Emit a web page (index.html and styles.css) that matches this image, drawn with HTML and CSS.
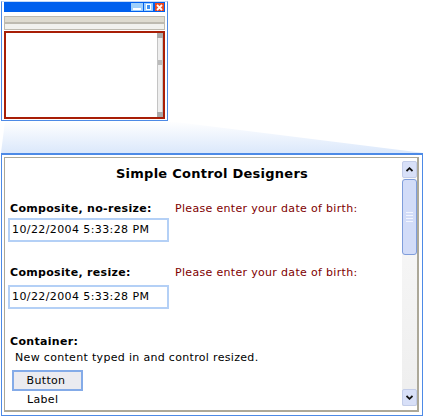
FILE: index.html
```html
<!DOCTYPE html>
<html lang="en">
<head>
	<meta charset="UTF-8">
	<title>Simple Control Designers</title>
	<link rel="stylesheet" href="styles.css">
</head>
<body>

	<div class="thumb">
		<div class="thumb-title">
			<span class="thumb-btn wide"><span class="thumb-min"></span></span>
			<span class="thumb-btn"><span class="thumb-max"></span></span>
			<span class="thumb-close">
				<svg width="7" height="7" viewBox="0 0 7 7"><path d="M1 1L6 6M6 1L1 6" stroke="#fff" stroke-width="1.800"/></svg>
			</span>
		</div>
		<div class="thumb-bar dark"></div>
		<div class="thumb-bar"></div>
		<div class="thumb-body">
			<div class="thumb-scroll">
				<div class="thumb-arrow"></div>
				<div class="thumb-track"><div class="thumb-grip"></div></div>
				<div class="thumb-arrow"></div>
			</div>
		</div>
	</div>

	<svg class="connector" width="424" height="32" viewBox="0 0 424 32">
		<defs>
			<linearGradient id="fade" x1="0" y1="0" x2="0" y2="1">
				<stop offset="0" stop-color="#ffffff"/>
				<stop offset="1" stop-color="#dbe8fb"/>
			</linearGradient>
		</defs>
		<polygon points="5,0 168,0 424,32 1,32" fill="url(#fade)"/>
	</svg>

	<div class="panel">
		<div class="panel-inner">
			<div class="content">
				<h1>Simple Control Designers</h1>

				<div class="row">
					<div class="col">
						<label>Composite, no-resize:</label>
						<div class="date">10/22/2004 5:33:28 PM</div>
					</div>
					<div class="prompt">Please enter your date of birth:</div>
				</div>

				<div class="row">
					<div class="col">
						<label>Composite, resize:</label>
						<div class="date low">10/22/2004 5:33:28 PM</div>
					</div>
					<div class="prompt">Please enter your date of birth:</div>
				</div>

				<div class="box">
					<label>Container:</label>
					<div class="typed">New content typed in and control resized.</div>
					<button type="button">Button</button>
					<div class="small-label">Label</div>
				</div>
			</div>

			<div class="scrollbar">
				<div class="arrow">
					<svg width="7" height="5" viewBox="0 0 7 5"><path d="M0.500 4L3.500 1.200L6.500 4" fill="none" stroke="#111" stroke-width="1.800"/></svg>
				</div>
				<div class="grip">
					<span></span><span></span><span></span><span></span>
				</div>
				<div class="track"></div>
				<div class="arrow">
					<svg width="7" height="5" viewBox="0 0 7 5"><path d="M0.500 1L3.500 3.800L6.500 1" fill="none" stroke="#111" stroke-width="1.800"/></svg>
				</div>
			</div>
		</div>
	</div>

</body>
</html>
```

FILE: styles.css
```css
* {
	box-sizing: border-box;
}
body {
	margin: 0;
	width: 424px;
	height: 416px;
	overflow: hidden;
	background: #fff;
	font-family: "DejaVu Sans", sans-serif;
	font-size: 11px;
	letter-spacing: 0.32px;
	color: #000;
}

/* small window at the top */
.thumb {
	width: 167px;
	height: 120px;
	margin: 1px 0 0 1px;
	padding: 0 2px;
	border: 1px solid #4d8ae6;
	border-top-color: #c4daf8;
	display: flex;
	flex-direction: column;
}
.thumb-title {
	height: 10px;
	flex: none;
	margin-bottom: 4px;
	padding: 1px 1px 0 0;
	background: #0060ee;
	display: flex;
	justify-content: flex-end;
	gap: 1px;
}
.thumb-btn {
	width: 9px;
	height: 8px;
	background: #9fd0fb;
	padding: 1px 2px;
	display: flex;
	align-items: flex-end;
}
.thumb-btn.wide {
	width: 12px;
}
.thumb-min {
	width: 100%;
	height: 2px;
	background: #fff;
}
.thumb-max {
	width: 100%;
	height: 100%;
	background: #3d92f2;
	border: 1px solid #fff;
}
.thumb-close {
	width: 9px;
	height: 8px;
	margin-left: 1px;
	background: #ee4a1e;
	display: flex;
	align-items: center;
	justify-content: center;
}
.thumb-bar {
	height: 7px;
	flex: none;
	background: #f1f1ee;
	border: 1px solid #bdbab0;
}
.thumb-bar.dark {
	background: #dedbd0;
}
.thumb-body {
	flex: 1;
	margin: 1px 0;
	background: #fff;
	border: 2px solid #a81e06;
	display: flex;
	justify-content: flex-end;
}
.thumb-scroll {
	width: 6px;
	display: flex;
	flex-direction: column;
}
.thumb-arrow {
	height: 5px;
	background: #aaa;
}
.thumb-track {
	flex: 1;
	background: #eee;
	border-left: 1px solid #c4c4c4;
	border-right: 1px solid #c4c4c4;
	padding-top: 22px;
}
.thumb-grip {
	height: 5px;
	background: #bbb;
}

.connector {
	display: block;
}

/* enlarged view */
.panel {
	width: 422px;
	height: 263px;
	margin-left: 1px;
	padding: 2px 3px 3px 2px;
	border: 1px solid #4d8ae6;
	border-top-width: 2px;
}
.panel-inner {
	height: 100%;
	padding: 3px 0 4px 0;
	border: 1px solid #aca899;
	border-width: 1px 2px 2px 1px;
	display: flex;
}
.content {
	flex: 1;
	padding: 4px 0 0 4px;
}
h1 {
	margin: 0 0 19px;
	padding-left: 13px;
	font-size: 13px;
	letter-spacing: 0.25px;
	line-height: 18px;
	text-align: center;
}
label {
	display: block;
	margin-left: 1px;
	font-weight: bold;
	line-height: 14px;
}
.row {
	height: 64px;
	display: flex;
}
.col {
	width: 166px;
}
.date {
	width: 161px;
	height: 24px;
	margin: 2px 0 0 -1px;
	padding-left: 2px;
	border: 2px solid #b4d0f6;
	letter-spacing: 0.4px;
	line-height: 20px;
}
.date.low {
	margin-top: 5px;
}
.prompt {
	color: #800000;
	line-height: 14px;
}
.box {
	padding-top: 5px;
}
.typed {
	margin: 2px 0 5px 6px;
	line-height: 14px;
}
button {
	display: block;
	width: 71px;
	height: 21px;
	margin-left: 3px;
	padding: 0 3px 0 0;
	background: #ebebf0;
	border: 2px solid #84abe8;
	font: inherit;
	letter-spacing: inherit;
	color: #000;
}
.small-label {
	margin: 2px 0 0 18px;
	line-height: 14px;
}

.scrollbar {
	width: 15px;
	display: flex;
	flex-direction: column;
	background: linear-gradient(to bottom, #fafafa, #eeeeee);
}
.arrow {
	height: 17px;
	background: #d8e0f8;
	border: 1px solid #c3cde9;
	border-radius: 2px;
	display: flex;
	align-items: center;
	justify-content: center;
	flex: none;
}
.grip {
	height: 76px;
	margin-top: 1px;
	background: #d2dcf8;
	border: 1px solid #7f9ddb;
	border-radius: 3px;
	display: flex;
	flex-direction: column;
	justify-content: center;
	gap: 2px;
	padding: 0 3px;
	flex: none;
}
.grip span {
	height: 1px;
	background: #f2f5ff;
}
.track {
	flex: 1;
}
```
